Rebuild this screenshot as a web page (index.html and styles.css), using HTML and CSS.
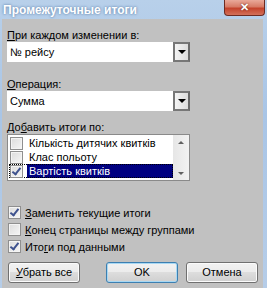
FILE: index.html
```html
<!DOCTYPE html>
<html>
<head>
<meta charset="utf-8">
<title>Промежуточные итоги</title>
<link rel="stylesheet" href="styles.css">
</head>
<body>
<div class="window">
  <div class="titlebar">
    <span class="title">Промежуточные итоги</span>
    <span class="close">&#x2715;</span>
  </div>
  <div class="client">
    <div class="label"><u>П</u>ри каждом изменении в:</div>
    <div class="combo first">
      <span class="value">№ рейсу</span>
      <span class="drop"><span class="arrow"></span></span>
    </div>

    <div class="label"><u>О</u>перация:</div>
    <div class="combo">
      <span class="value">Сумма</span>
      <span class="drop"><span class="arrow"></span></span>
    </div>

    <div class="label">До<u>б</u>авить итоги по:</div>
    <div class="listbox">
      <div class="items">
        <div class="item"><span class="box"></span><span class="text">Кількість дитячих квитків</span></div>
        <div class="item"><span class="box"></span><span class="text">Клас польоту</span></div>
        <div class="item sel"><span class="box checked"></span><span class="text">Вартість квитків</span></div>
      </div>
      <div class="vscroll">
        <span class="up"></span>
        <span class="down"></span>
      </div>
    </div>

    <div class="options">
      <div class="check"><span class="box checked"></span><span><u>З</u>аменить текущие итоги</span></div>
      <div class="check"><span class="box"></span><span><u>К</u>онец страницы между группами</span></div>
      <div class="check"><span class="box checked"></span><span>Ито<u>г</u>и под данными</span></div>
    </div>

    <div class="buttons">
      <span class="btn"><u>У</u>брать все</span>
      <span class="btn default">OK</span>
      <span class="btn">Отмена</span>
    </div>
  </div>
</div>
</body>
</html>
```

FILE: styles.css
```css
/* Subtotals dialog, Windows 7 look */

html, body
{ margin: 0;
padding: 0;
}

body
{ font-family: "Liberation Sans", Arial, sans-serif;
font-size: 11px;
color: #000;
background: #b4cde9;
}

.window
{ width: 267px;
height: 288px;
display: flex;
flex-direction: column;
background: linear-gradient(to bottom, #b8d0ea, #a9c5e6 40%, #b6cde8);
}

/* Title bar */

.titlebar
{ height: 19px;
display: flex;
align-items: flex-start;
padding-left: 3px;
}

.title
{ margin-top: 3px;
color: #fff;
font-weight: bold;
font-size: 12px;
text-shadow: 0 0 3px #6d8fb6, 0 0 2px #7d9cc0;
}

.close
{ margin-left: auto;
margin-right: 2px;
width: 41px;
height: 16px;
box-sizing: border-box;
border: 1px solid #6d2b22;
border-top: none;
border-radius: 0 0 4px 4px;
background: linear-gradient(to bottom, #e9a99a, #d77b66 45%, #c4432c 55%, #d2705a);
color: #fff;
font-size: 11px;
font-weight: bold;
text-align: center;
line-height: 15px;
text-shadow: 0 0 2px #5a1a10;
}

/* Client area */

.client
{ flex: 1;
margin: 0 4px 0 2px;
background: #c1c1c1;
padding: 9px 0 0 5px;
display: flex;
flex-direction: column;
}

.label
{ height: 14px;
line-height: 14px;
}

.combo
{ width: 183px;
height: 20px;
margin-bottom: 9px;
display: flex;
background: #fff;
}

.combo.first
{ margin-bottom: 15px;
}

.combo .value
{ flex: 1;
padding-left: 3px;
line-height: 20px;
}

.drop
{ width: 17px;
height: 20px;
box-sizing: border-box;
border: 2px solid #777;
border-right-color: #6a6a6a;
background: linear-gradient(to right, #f4f4f4, #dcdcdc);
display: flex;
align-items: center;
justify-content: center;
}

.arrow
{ width: 0;
height: 0;
border-left: 4px solid transparent;
border-right: 4px solid transparent;
border-top: 4px solid #000;
}

/* List box with check boxes */

.listbox
{ width: 183px;
height: 47px;
box-sizing: border-box;
border: 1px solid #8a8a8a;
background: #fff;
display: flex;
}

.items
{ flex: 1;
padding: 1px 0 0 1px;
}

.item
{ height: 14px;
display: flex;
align-items: center;
}

.item .box
{ margin: 0 4px 0 1px;
}

.item .text
{ line-height: 14px;
padding: 0 2px;
}

.item.sel
{ outline: 1px dotted #000;
outline-offset: -1px;
}

.item.sel .text
{ flex: 1;
background: #000080;
color: #fff;
}

.vscroll
{ width: 16px;
background: linear-gradient(to right, #e6e6e6, #f2f2f2);
display: flex;
flex-direction: column;
justify-content: space-between;
align-items: center;
padding: 6px 0 5px;
box-sizing: border-box;
}

.vscroll .up
{ border-left: 3px solid transparent;
border-right: 3px solid transparent;
border-bottom: 3px solid #606060;
}

.vscroll .down
{ border-left: 3px solid transparent;
border-right: 3px solid transparent;
border-top: 3px solid #606060;
}

/* Check boxes */

.box
{ width: 13px;
height: 13px;
box-sizing: border-box;
border: 1px solid #8f8f8f;
background: linear-gradient(135deg, #dcdcdc, #f6f6f6);
box-shadow: inset 0 0 0 1px #f4f4f4;
flex: none;
position: relative;
}

.box.checked::after
{ content: "";
position: absolute;
left: 3px;
top: 0px;
width: 3px;
height: 7px;
border-right: 2px solid #3e528e;
border-bottom: 2px solid #3e528e;
transform: rotate(38deg);
}

.options
{ margin-top: 25px;
display: flex;
flex-direction: column;
gap: 4px;
}

.check
{ height: 13px;
display: flex;
align-items: center;
gap: 4px;
padding-left: 1px;
}

/* Buttons */

.buttons
{ margin-top: 9px;
display: flex;
}

.btn
{ width: 72px;
height: 21px;
box-sizing: border-box;
border: 1px solid #707070;
border-radius: 3px;
background: linear-gradient(to bottom, #f2f2f2, #ebebeb 50%, #dddddd 50%, #cfcfcf);
box-shadow: inset 0 0 0 1px #fbfbfb;
text-align: center;
line-height: 19px;
margin-left: 1px;
}

.btn.default
{ margin-left: 26px;
border-color: #3c7fb1;
box-shadow: inset 0 0 0 1px #a8d8f3;
}

.btn + .btn.default + .btn
{ margin-left: 8px;
}
```
